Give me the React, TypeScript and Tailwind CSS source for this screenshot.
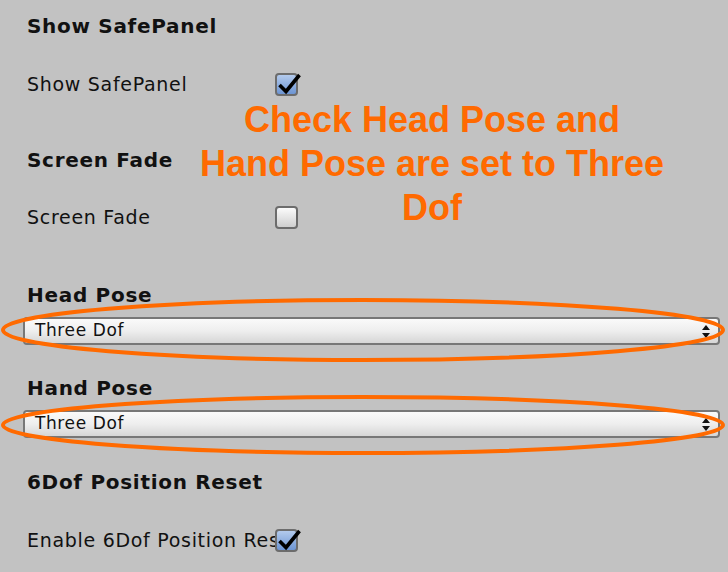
import React from "react";

const uiFont = { fontFamily: '"DejaVu Sans", "Noto Sans", sans-serif' };

function Checkbox({ checked }: { checked?: boolean }) {
  return (
    <div className="relative w-[23px] h-[23px] shrink-0">
      <div
        className={
          "absolute inset-0 rounded-[4px] border-2 border-[#6c6c6c] " +
          (checked
            ? "bg-gradient-to-b from-[#b3caec] to-[#6d95d3]"
            : "bg-gradient-to-b from-[#fbfbfb] to-[#cfcfcf]")
        }
      />
      {checked && (
        <svg className="absolute left-0 top-0 overflow-visible" width="23" height="23" viewBox="0 0 23 23">
          <path d="M4.5 12 L11 18.5 L24.5 2" fill="none" stroke="#000" strokeWidth="3.6" strokeLinejoin="miter" />
        </svg>
      )}
    </div>
  );
}

function Heading({ children, className = "" }: { children: React.ReactNode; className?: string }) {
  return (
    <div
      className={"h-[28px] flex items-center pl-[4px] text-[20px] tracking-[0.7px] font-bold text-[#111] " + className}
      style={uiFont}
    >
      {children}
    </div>
  );
}

function ToggleRow({ label, checked, className = "" }: { label: string; checked?: boolean; className?: string }) {
  return (
    <div className={"flex items-center h-[23px] " + className}>
      <div
        className="w-[252px] pl-[4px] overflow-hidden whitespace-nowrap text-[19px] tracking-[0.7px] text-[#111]"
        style={uiFont}
      >
        {label}
      </div>
      <Checkbox checked={checked} />
    </div>
  );
}

function Dropdown({ value, className = "" }: { value: string; className?: string }) {
  return (
    <div
      className={
        "h-[28px] w-[697px] flex items-center justify-between rounded-[4px] border-2 border-[#777] bg-gradient-to-b from-[#fafafa] via-[#eeeeee] to-[#d6d6d6] pl-[10px] pr-[8px] " +
        className
      }
    >
      <span className="text-[17px] tracking-[0.6px] text-[#111]" style={uiFont}>
        {value}
      </span>
      <svg width="8" height="13" viewBox="0 0 8 13">
        <path d="M4 0 L8 5 L0 5 Z" fill="#111" />
        <path d="M0 8 L8 8 L4 13 Z" fill="#111" />
      </svg>
    </div>
  );
}

export default function App() {
  return (
    <div className="relative w-[728px] h-[572px] bg-[#c2c2c2] overflow-hidden">
      <div className="flex flex-col px-[23px] pt-[12px]">
        <Heading>Show SafePanel</Heading>
        <ToggleRow label="Show SafePanel" checked className="mt-[33px]" />
        <Heading className="mt-[50px]">Screen Fade</Heading>
        <ToggleRow label="Screen Fade" className="mt-[32px]" />
        <Heading className="mt-[52px]">Head Pose</Heading>
        <Dropdown value="Three Dof" className="mt-[8px]" />
        <Heading className="mt-[29px]">Hand Pose</Heading>
        <Dropdown value="Three Dof" className="mt-[8px]" />
        <Heading className="mt-[30px]">6Dof Position Reset</Heading>
        <ToggleRow label="Enable 6Dof Position Reset" checked className="mt-[33px]" />
      </div>

      {/* annotation */}
      <div
        className="absolute left-[182px] top-[98px] w-[500px] text-center whitespace-nowrap text-[36px] leading-[44px] font-bold text-[#ff6a00]"
        style={{ fontFamily: '"Liberation Sans", Arial, sans-serif' }}
      >
        Check Head Pose and
        <br />
        Hand Pose are set to Three
        <br />
        Dof
      </div>
      <svg className="absolute inset-0 pointer-events-none" width="728" height="572" viewBox="0 0 728 572">
        <ellipse cx="363" cy="330" rx="360" ry="30" fill="none" stroke="#ff6a00" strokeWidth="4" />
        <ellipse cx="363" cy="425" rx="360" ry="28" fill="none" stroke="#ff6a00" strokeWidth="4" />
      </svg>
    </div>
  );
}
